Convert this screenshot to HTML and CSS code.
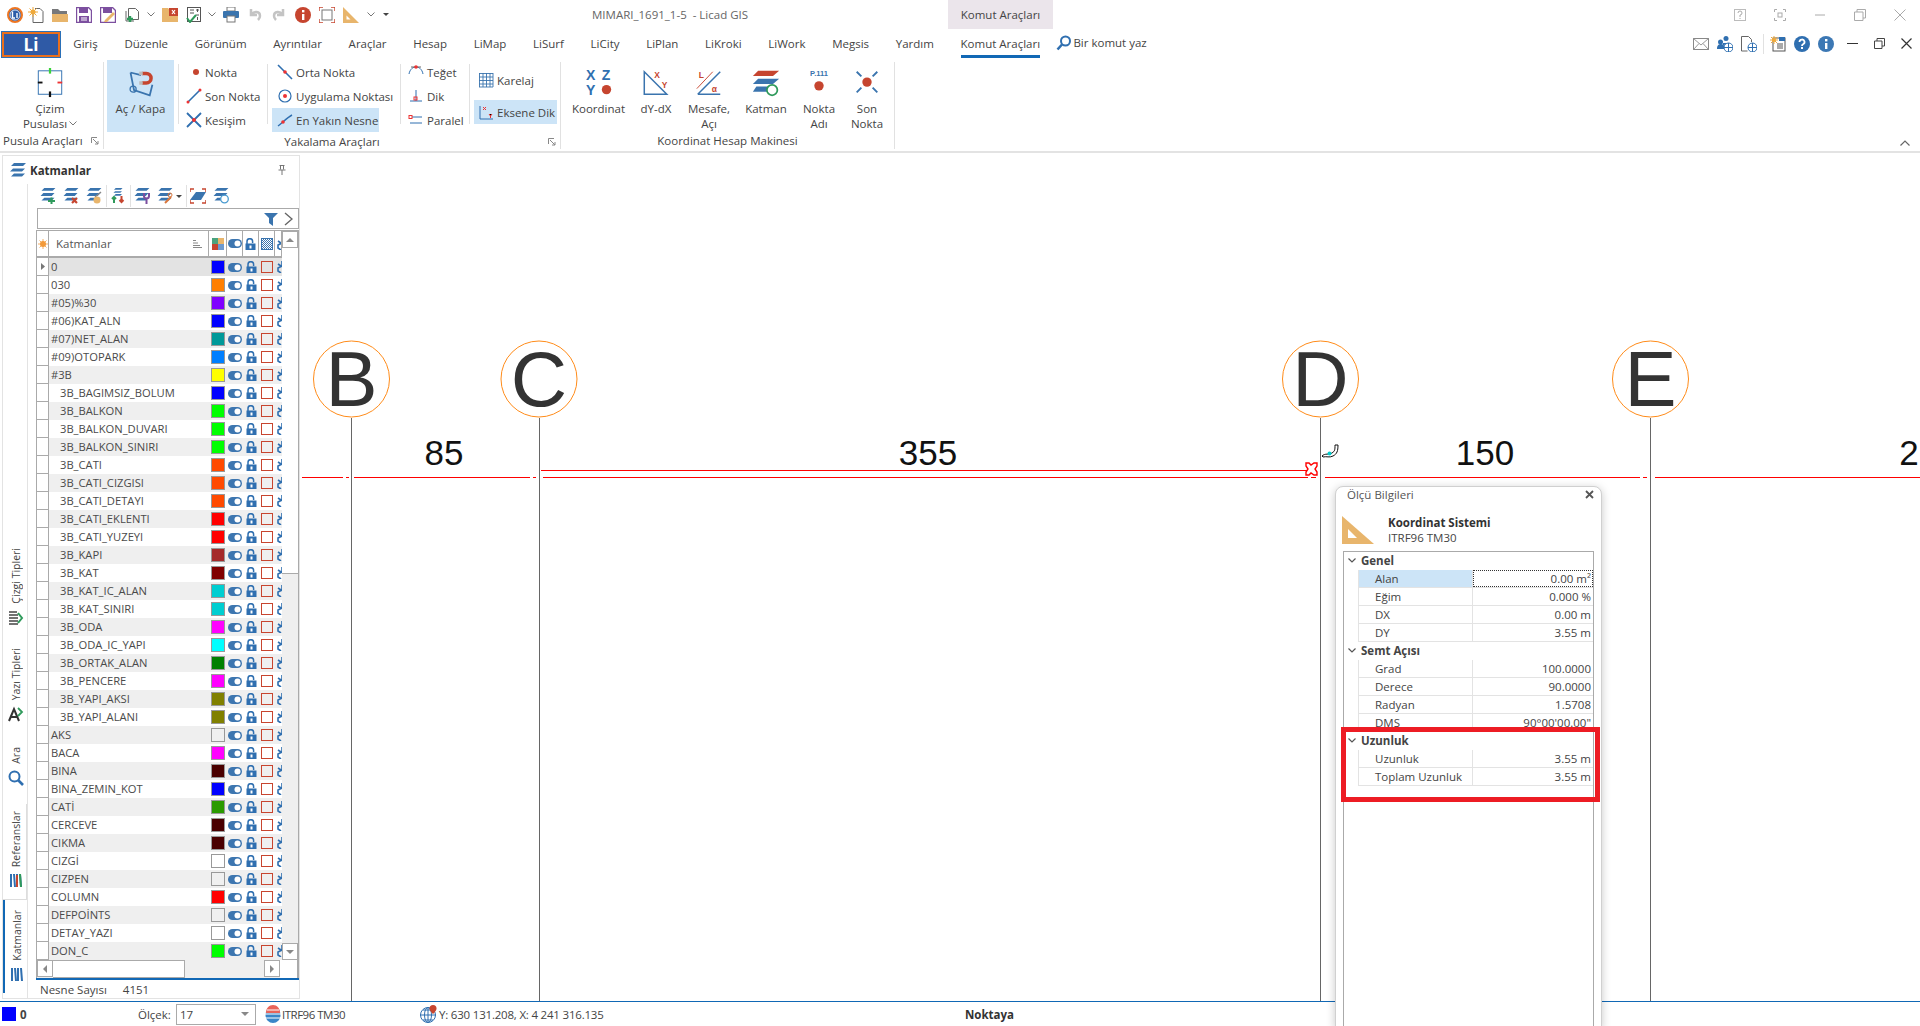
FILE: index.html
```html
<!DOCTYPE html>
<html lang="tr">
<head>
<meta charset="utf-8">
<title>MIMARI_1691_1-5 - Licad GIS</title>
<link rel="stylesheet" href="styles.css">
</head>
<body>
<svg class="defs" width="0" height="0" aria-hidden="true">
  <symbol id="layers" viewBox="0 0 16 14"><path d="M4 0h12l-3 3H1zM3 5.500h12l-3 3H0zM4 10.500h11l-3 3H1z" fill="#3a74ae"/></symbol>
  <symbol id="eye" viewBox="0 0 14 9"><rect width="14" height="9" rx="4.500" fill="#3d76b0"/><circle cx="9.500" cy="4.500" r="3" fill="#fff"/></symbol>
  <symbol id="lock" viewBox="0 0 11 12"><path d="M2 6V3.500a2.800 2.800 0 0 1 5.600 0V5" fill="none" stroke="#2f6fb0" stroke-width="1.500"/><rect x="0.500" y="5.500" width="10" height="6.500" fill="#2f6fb0"/><rect x="4.500" y="7.500" width="2" height="3" fill="#fff"/></symbol>
  <symbol id="cut" viewBox="0 0 6 12"><path d="M5 0v5L1 7v3l3 2M1 3l3 2" fill="none" stroke="#2f6fb0" stroke-width="1.600"/></symbol>
  <symbol id="chev" viewBox="0 0 8 5"><path d="M.5.500 4 4 7.500.500" fill="none" stroke="#777" stroke-width="1"/></symbol>
</svg>

<div class="app">
  <header class="titlebar">
    <div class="qat">
      <svg class="i16 q-logo" viewBox="0 0 16 16"><circle cx="8" cy="8" r="7" fill="#2b5ca8" stroke="#ee7622" stroke-width="2"/><circle cx="8" cy="8" r="5" fill="none" stroke="#fff" stroke-width=".8"/><path d="M5.500 4.500v6.500h2.500M10 6v5" stroke="#fff" stroke-width="1.400" fill="none"/></svg>
      <svg class="i16" viewBox="0 0 16 16"><path d="M7 1.500h5l3 3v11H5V7" fill="#fff" stroke="#666"/><circle cx="5" cy="5" r="2.500" fill="#efa93a"/><path d="M5 0v10M0 5h10M1.500 1.500l7 7M8.500 1.500l-7 7" stroke="#efa93a"/></svg>
      <svg class="i16" viewBox="0 0 16 16"><path d="M0 2h6l2 2h7v3H0z" fill="#77787a"/><path d="M0 15V7h16v8z" fill="#e8b56c"/></svg>
      <svg class="i16" viewBox="0 0 16 16"><path d="M.5.500h12l3 3v12H.5z" fill="#fff" stroke="#7c4f9f" stroke-width="1.400"/><rect x="3" y="1" width="9" height="5" fill="#7c4f9f"/><rect x="3" y="9" width="10" height="6" fill="#7c4f9f"/><path d="M5 11h6M5 13h6" stroke="#fff"/></svg>
      <svg class="i16 q-wide" viewBox="0 0 16 16"><path d="M.5.500h12l3 3v12H.5z" fill="#fff" stroke="#7c4f9f" stroke-width="1.400"/><rect x="3" y="1" width="9" height="5" fill="#7c4f9f"/><path d="M5 13l8-8 2 2-8 8H4z" fill="#e8b56c"/></svg>
      <span class="qat-drop"><svg class="i16" viewBox="0 0 16 16"><path d="M3.500 1.500h7l3 3v8h-10zM1 4v10h8" fill="#fff" stroke="#666"/><path d="M2 12h6M5 9v6" stroke="#2f9a5b" stroke-width="2.400"/></svg><svg class="i-chev" viewBox="0 0 8 5"><use href="#chev"/></svg></span>
      <svg class="i16" viewBox="0 0 16 16"><path d="M0 1h6l2 2h8v12H0z" fill="#e8b56c"/><rect x="7" y="1" width="9" height="8" fill="#c6452f"/><path d="M10 3l3 4M13 3l-3 4" stroke="#fff" stroke-width="1.200"/></svg>
      <span class="qat-drop"><svg class="i16" viewBox="0 0 16 16"><rect x="1.500" y=".500" width="13" height="14" fill="#fff" stroke="#555"/><path d="M4 3h4M4 6h4M10 3h3M10 8h3M11.500 2v3M11.500 10v3" stroke="#555"/><path d="M1 11l3 4 6-7" fill="none" stroke="#2f9a5b" stroke-width="2"/></svg><svg class="i-chev" viewBox="0 0 8 5"><use href="#chev"/></svg></span>
      <svg class="i16" viewBox="0 0 16 16"><rect x="4" y="0" width="8" height="4" fill="#fff" stroke="#777"/><rect x="0" y="4" width="16" height="7" rx="1" fill="#3a74ae"/><rect x="4" y="9" width="8" height="6" fill="#fff" stroke="#777"/></svg>
      <svg class="i16" viewBox="0 0 16 16"><path d="M4 2v6h6M4.500 7.500C7 4 13 4 13 9c0 2-1 3-2 4" fill="none" stroke="#c4c4c4" stroke-width="2.500"/></svg>
      <svg class="i16" viewBox="0 0 16 16"><path d="M12 2v6H6M11.500 7.500C9 4 3 4 3 9c0 2 1 3 2 4" fill="none" stroke="#c4c4c4" stroke-width="2.500"/></svg>
      <svg class="i16" viewBox="0 0 16 16"><circle cx="8" cy="8" r="8" fill="#c6452f"/><rect x="7" y="7" width="2.400" height="6" fill="#fff"/><rect x="7" y="3" width="2.400" height="2.400" fill="#fff"/></svg>
      <svg class="i16" viewBox="0 0 16 16"><path d="M0 4V0h4M12 0h4v4M16 12v4h-4M4 16H0v-4" fill="none" stroke="#c6452f" stroke-width="1.400"/><rect x="3" y="3" width="10" height="10" fill="#fff" stroke="#777"/></svg>
      <svg class="i16" viewBox="0 0 16 16"><path d="M0 0l16 16H0z" fill="#e8b56c"/><path d="M3.500 8.500l4 4h-4z" fill="#fff"/></svg>
      <svg class="i-chev" viewBox="0 0 8 5"><use href="#chev"/></svg>
      <svg class="i-drop" viewBox="0 0 6 3"><path d="M0 0h6L3 3z" fill="#444"/></svg>
    </div>
    <div class="doc-title">MIMARI_1691_1-5&nbsp; - Licad GIS</div>
    <div class="ctx-tab">Komut Araçları</div>
    <div class="win-btns">
      <svg class="i12" viewBox="0 0 12 12"><rect x=".500" y=".500" width="11" height="11" fill="none" stroke="#bbb"/><path d="M4 4a2 2 0 1 1 2 2v2M6 9v1" fill="none" stroke="#aaa"/></svg>
      <svg class="i12" viewBox="0 0 12 12"><path d="M.500 3V.500H3M9 .500h2.500V3M11.500 9v2.500H9M3 11.500H.500V9" fill="none" stroke="#aaa"/><rect x="4" y="4" width="4" height="4" fill="none" stroke="#aaa"/></svg>
      <svg class="i12" viewBox="0 0 12 12"><path d="M1 6h10" stroke="#aaa"/></svg>
      <svg class="i12" viewBox="0 0 12 12"><path d="M3 3V.500h8.500V9H9M.500 3H9v8.500H.500z" fill="none" stroke="#aaa"/></svg>
      <svg class="i12" viewBox="0 0 12 12"><path d="M.500.500l11 11M11.500.500l-11 11" stroke="#aaa"/></svg>
    </div>
  </header>

  <nav class="tabs">
    <div class="li-btn">Li</div>
    <span class="tab">Giriş</span>
    <span class="tab">Düzenle</span>
    <span class="tab">Görünüm</span>
    <span class="tab">Ayrıntılar</span>
    <span class="tab">Araçlar</span>
    <span class="tab">Hesap</span>
    <span class="tab">LiMap</span>
    <span class="tab">LiSurf</span>
    <span class="tab">LiCity</span>
    <span class="tab">LiPlan</span>
    <span class="tab">LiKroki</span>
    <span class="tab">LiWork</span>
    <span class="tab">Megsis</span>
    <span class="tab">Yardım</span>
    <span class="tab active"><span class="tab-text">Komut Araçları</span></span>
    <div class="cmd-search">
      <svg class="i16" viewBox="0 0 16 16"><circle cx="9.500" cy="6" r="4.500" fill="#fff" stroke="#2f6fb0" stroke-width="2"/><path d="M6 9.500 1.500 14.500" stroke="#2f6fb0" stroke-width="2.600"/></svg>
      <span>Bir komut yaz</span>
    </div>
    <div class="tab-right">
      <svg class="i16" viewBox="0 0 16 12"><rect x=".500" y=".500" width="15" height="11" fill="#fff" stroke="#888"/><path d="M.500.500 8 7l7.500-6.500M.500 11.500 6 5.500M15.500 11.500 10 5.500" fill="none" stroke="#999"/></svg>
      <svg class="i16" viewBox="0 0 16 16"><circle cx="9" cy="2.500" r="2.500" fill="#2f6fb0"/><circle cx="3.500" cy="6" r="2.500" fill="#2f6fb0"/><path d="M0 13c0-4 2-5 4-5s3 1 3 2v3zM6 7h6v2H6z" fill="#2f6fb0"/><circle cx="11.500" cy="11.500" r="4.500" fill="#fff" stroke="#2f6fb0"/><path d="M7 11.500h9M11.500 7v9" stroke="#2f6fb0"/></svg>
      <svg class="i16" viewBox="0 0 16 16"><path d="M.500.500h7l3 3V6M.500.500v14.500h6" fill="#fff" stroke="#666"/><circle cx="11.500" cy="11.500" r="4.500" fill="#fff" stroke="#2f6fb0"/><path d="M7 11.500h9M11.500 7v9" stroke="#2f6fb0"/></svg>
      <span class="vsep"></span>
      <svg class="i16" viewBox="0 0 16 16"><rect x="3" y="2" width="12" height="13" fill="#fff" stroke="#555"/><rect x="9" y="1" width="6" height="4" fill="#2f6fb0"/><path d="M7 8h6M7 10h6M7 12h6" stroke="#555"/><circle cx="4" cy="4" r="2" fill="#efa93a"/><path d="M4 0v8M0 4h8M1 1l6 6M7 1 1 7" stroke="#efa93a"/></svg>
      <svg class="i16" viewBox="0 0 16 16"><circle cx="8" cy="8" r="8" fill="#2f6fb0"/><path d="M5.500 6a2.500 2.500 0 1 1 3.500 2.300C8.300 8.700 8 9 8 10" fill="none" stroke="#fff" stroke-width="1.800"/><rect x="7" y="11" width="2" height="2" fill="#fff"/></svg>
      <svg class="i16" viewBox="0 0 16 16"><circle cx="8" cy="8" r="8" fill="#3c78b4"/><rect x="7" y="7" width="2.400" height="6" fill="#fff"/><rect x="7" y="3" width="2.400" height="2.400" fill="#fff"/></svg>
      <svg class="i11 first-win" viewBox="0 0 11 11"><path d="M0 5.500h11" stroke="#333"/></svg>
      <svg class="i11" viewBox="0 0 11 11"><path d="M3 3V.500h7.500V8H8M.500 3H8v7.500H.500z" fill="none" stroke="#444"/></svg>
      <svg class="i11" viewBox="0 0 11 11"><path d="M.500.500l10 10M10.500.500l-10 10" stroke="#333" stroke-width="1.200"/></svg>
    </div>
  </nav>

  <section class="ribbon">
    <div class="group g1">
      <div class="group-body">
        <div class="big b-cizim">
          <svg class="big-ic" viewBox="0 0 26 32"><rect x=".500" y="3" width="25" height="25" fill="#fff" stroke="#2f6fb0"/><path d="M13 0v6" stroke="#3ad23a" stroke-width="2.400"/><path d="M21 15.500h5" stroke="#e33" stroke-width="2"/><path d="M0 15.500h5" stroke="#111" stroke-width="2"/><path d="M13 25v6" stroke="#111" stroke-width="2.400"/></svg>
          <span>Çizim</span><span class="with-chev">Pusulası<svg class="i-chev" viewBox="0 0 8 5"><use href="#chev"/></svg></span>
        </div>
      </div>
      <div class="group-label">Pusula Araçları<svg class="launcher" viewBox="0 0 8 8"><path d="M.500 6V.500H6M2 2l5 5M7 4v3H4" fill="none" stroke="#888"/></svg></div>
    </div>

    <div class="group g2">
      <div class="group-body">
        <div class="big b-ackapa">
          <svg class="big-ic" viewBox="0 0 32 32"><path d="M4 4l4 20 18 6 3-12M4 4l12 3" fill="none" stroke="#3a74ae" stroke-width="2"/><path d="M17 3h5a6.500 6.500 0 0 1 0 15h-5v-4h5a2.500 2.500 0 0 0 0-7h-5z" fill="#c6452f"/><rect x="14" y="3" width="4" height="4" fill="#bbb"/><rect x="14" y="14" width="4" height="4" fill="#bbb"/><circle cx="7" cy="23" r="3.500" fill="none" stroke="#3a74ae" stroke-width="1.400"/></svg>
          <span>Aç / Kapa</span>
        </div>
        <div class="small-col c1">
          <div class="item"><svg class="i16" viewBox="0 0 16 16"><circle cx="10" cy="8" r="3" fill="#c6452f"/></svg><span>Nokta</span></div>
          <div class="item"><svg class="i16" viewBox="0 0 16 16"><path d="M2 14 14 2" stroke="#2f6fb0" stroke-width="1.600"/><circle cx="2" cy="14" r="1.500" fill="#e33"/><circle cx="14" cy="2" r="1.500" fill="#e33"/></svg><span>Son Nokta</span></div>
          <div class="item"><svg class="i16" viewBox="0 0 16 16"><path d="M1 1l14 14M15 1 1 15" stroke="#2f6fb0" stroke-width="1.800"/><circle cx="8" cy="8" r="2" fill="#e33"/></svg><span>Kesişim</span></div>
        </div>
        <div class="small-col c2">
          <div class="item"><svg class="i16" viewBox="0 0 16 16"><path d="M1 1l14 14" stroke="#2f6fb0" stroke-width="1.600"/><circle cx="8" cy="8" r="1.800" fill="#e33"/></svg><span>Orta Nokta</span></div>
          <div class="item"><svg class="i16" viewBox="0 0 16 16"><circle cx="8" cy="8" r="6" fill="none" stroke="#2f6fb0" stroke-width="1.200"/><circle cx="8" cy="8" r="2" fill="#e33"/></svg><span>Uygulama Noktası</span></div>
          <div class="item on"><svg class="i16" viewBox="0 0 16 16"><path d="M1 14C5 11 11 5 15 3" fill="none" stroke="#2f6fb0" stroke-width="1.400"/><circle cx="6" cy="10" r="1.800" fill="#e33"/></svg><span>En Yakın Nesne</span></div>
        </div>
        <div class="small-col c3">
          <div class="item"><svg class="i16" viewBox="0 0 16 16"><path d="M1 10C2 5 5 3 8 3s6 2 7 7" fill="none" stroke="#2f6fb0"/><path d="M3 3h10" stroke="#666"/><circle cx="8" cy="3" r="1.800" fill="#e33"/></svg><span>Teğet</span></div>
          <div class="item"><svg class="i16" viewBox="0 0 16 16"><path d="M2 13h12M8 2v11" stroke="#2f6fb0"/><rect x="6" y="9" width="3" height="3" fill="none" stroke="#e33"/></svg><span>Dik</span></div>
          <div class="item"><svg class="i16" viewBox="0 0 16 16"><path d="M3 5h11M2 11h12" stroke="#2f6fb0"/><rect x="1" y="3.500" width="3" height="3" fill="#fff" stroke="#e33"/></svg><span>Paralel</span></div>
        </div>
        <div class="small-col c4">
          <div class="item mid"><svg class="i16" viewBox="0 0 16 16"><path d="M1 1.500h14M1 5h14M1 8.500h14M1 12h14M1.500 1v14M5 1v14M8.500 1v14M12 1v14M1 15h14M15 1v14" stroke="#3a74ae" stroke-width=".9"/></svg><span>Karelaj</span></div>
          <div class="item mid on"><svg class="i16" viewBox="0 0 16 16"><path d="M2 2v13h13" fill="none" stroke="#2f6fb0"/><path d="M5 3l3 3M8 3 5 6M11 10l1.500 2 1.500-2M12.500 12v2" stroke="#e33"/></svg><span>Eksene Dik</span></div>
        </div>
      </div>
      <div class="group-label">Yakalama Araçları<svg class="launcher" viewBox="0 0 8 8"><path d="M.500 6V.500H6M2 2l5 5M7 4v3H4" fill="none" stroke="#888"/></svg></div>
    </div>

    <div class="group g3">
      <div class="group-body">
        <div class="big w-k"><svg class="big-ic" viewBox="0 0 28 32"><text x="0" y="13" class="ic-t">X</text><text x="17" y="13" class="ic-t">Z</text><text x="0" y="29" class="ic-t">Y</text><circle cx="22" cy="23" r="5" fill="#c6452f"/></svg><span>Koordinat</span></div>
        <div class="big w-d"><svg class="big-ic" viewBox="0 0 28 32"><path d="M1.500 4v24h24z" fill="none" stroke="#3a74ae" stroke-width="1.600"/><text x="12" y="11" class="ic-r">X</text><text x="20" y="21" class="ic-r">Y</text></svg><span>dY-dX</span></div>
        <div class="big w-m"><svg class="big-ic" viewBox="0 0 28 32"><path d="M2 28 26 4M2 28h24" fill="none" stroke="#3a74ae" stroke-width="1.600"/><path d="M1 22 18 4" stroke="#c6452f"/><text x="3" y="11" class="ic-r">L</text><text x="17" y="26" class="ic-r">α</text></svg><span>Mesafe,</span><span>Açı</span></div>
        <div class="big w-t"><svg class="big-ic" viewBox="0 0 32 32"><path d="M7 2h24l-7 6H1z" fill="#c6452f"/><path d="M7 11h24l-7 6H1z" fill="#3a74ae"/><path d="M5 20h16l-4 6H1z" fill="#3a74ae"/><circle cx="23" cy="24" r="6" fill="#fff" stroke="#2f9a5b" stroke-width="2"/></svg><span>Katman</span></div>
        <div class="big w-n"><svg class="big-ic" viewBox="0 0 28 32"><text x="14" y="9" class="ic-p">P.111</text><circle cx="14" cy="19" r="5" fill="#c6452f"/></svg><span>Nokta</span><span>Adı</span></div>
        <div class="big w-s"><svg class="big-ic" viewBox="0 0 28 32"><circle cx="14" cy="15" r="5" fill="#c6452f"/><path d="M3 4l5 5M25 4l-5 5M3 26l5-5M25 26l-5-5" stroke="#3a74ae" stroke-width="2"/></svg><span>Son</span><span>Nokta</span></div>
      </div>
      <div class="group-label">Koordinat Hesap Makinesi</div>
    </div>
    <svg class="collapse" viewBox="0 0 10 6"><path d="M.500 5.500 5 1l4.500 4.500" fill="none" stroke="#666" stroke-width="1.200"/></svg>
  </section>

  <main class="main">
    <aside class="panel">
      <div class="side">
        <div class="side-tab s-cizgi"><span class="vtext">Çizgi Tipleri</span><svg class="i16" viewBox="0 0 16 16"><path d="M1 2h8M1 5h9M1 8h9M1 11h9M1 14h9" stroke="#444" stroke-width="1.600"/><path d="M10 3l4 5-4 5" fill="none" stroke="#2f9a5b" stroke-width="2"/></svg></div>
        <div class="side-tab s-yazi"><span class="vtext">Yazı Tipleri</span><svg class="i16" viewBox="0 0 16 16"><path d="M1 15 6 3l5 12M3 11h6" fill="none" stroke="#333" stroke-width="2"/><path d="M10 2l4 4-4 4" fill="none" stroke="#2f9a5b" stroke-width="1.800"/></svg></div>
        <div class="side-tab s-ara"><span class="vtext">Ara</span><svg class="i16" viewBox="0 0 16 16"><circle cx="6.500" cy="6.500" r="5" fill="none" stroke="#2f6fb0" stroke-width="2"/><path d="M10 10l5 5" stroke="#2f6fb0" stroke-width="2.600"/></svg></div>
        <div class="side-tab s-ref"><span class="vtext">Referanslar</span><svg class="i16" viewBox="0 0 12 16"><path d="M1 1v13M4 1l1 13M7 1v13M10 1l1 13" stroke="#2f6fb0" stroke-width="2"/><path d="M7 2v12" stroke="#c6452f" stroke-width="2"/><path d="M10 1l1 13" stroke="#2f9a5b" stroke-width="2"/></svg></div>
        <div class="side-tab s-kat"><span class="vtext">Katmanlar</span><svg class="i16" viewBox="0 0 12 16"><path d="M1 1v13M4 1l1 13M7 1v13M10 1l1 13" stroke="#2f6fb0" stroke-width="2"/></svg></div>
      </div>
      <div class="panel-body">
        <div class="panel-head">
          <svg class="i16" viewBox="0 0 16 14"><use href="#layers"/></svg>
          <b>Katmanlar</b>
          <svg class="pin" viewBox="0 0 8 10"><path d="M1.500.500h5M2.500.500v4M5.500.500v4M.500 5h7M4 5v5" fill="none" stroke="#777"/></svg>
        </div>
        <div class="panel-inner">
          <div class="p-toolbar">
            <svg class="i16" viewBox="0 0 16 16"><use href="#layers" width="16" height="13"/><path d="M8 13h7M11.500 9.500v6.500" stroke="#2f9a5b" stroke-width="2"/></svg>
            <svg class="i16" viewBox="0 0 16 16"><use href="#layers" width="16" height="13"/><path d="M9 10l5 5M14 10l-5 5" stroke="#c6452f" stroke-width="2.200"/></svg>
            <svg class="i16" viewBox="0 0 16 16"><use href="#layers" width="16" height="13"/><path d="M9 9l6-5" stroke="#888" stroke-width="1.400"/><circle cx="11" cy="12" r="3.500" fill="#e8b56c"/></svg>
            <span class="t-sep"></span>
            <svg class="i16" viewBox="0 0 16 16"><use href="#layers" width="16" height="8"/><path d="M4 9v6M2 11l2-2 2 2" fill="none" stroke="#2f9a5b" stroke-width="2"/><path d="M11.500 8v6M9.500 12l2 2 2-2" fill="none" stroke="#c6452f" stroke-width="2"/></svg>
            <span class="t-sep"></span>
            <svg class="i16" viewBox="0 0 16 16"><use href="#layers" width="16" height="13"/><path d="M10 5v3a2.500 2.500 0 0 0 5 0V5M12.500 10v6" fill="none" stroke="#7c4f9f" stroke-width="2"/></svg>
            <span class="t-drop"><svg class="i16" viewBox="0 0 16 16"><use href="#layers" width="16" height="13"/><path d="M8 15l6-6" stroke="#d9763d" stroke-width="2"/><circle cx="13" cy="7" r="2" fill="none" stroke="#d9763d"/></svg><svg class="i-drop" viewBox="0 0 6 3"><path d="M0 0h6L3 3z" fill="#444"/></svg></span>
            <span class="t-sep"></span>
            <svg class="i16" viewBox="0 0 16 16"><path d="M6 4h10l-5 8H0z" fill="#3a74ae"/><path d="M0 4V1h4M12 1h4v3M16 12v3h-4M4 15H0v-3" fill="none" stroke="#c6452f" stroke-width="1.500"/></svg>
            <svg class="i16" viewBox="0 0 16 16"><use href="#layers" width="16" height="13"/><circle cx="11.500" cy="11" r="3.800" fill="#fff" stroke="#4a9bd0" stroke-width="1.300"/></svg>
          </div>
          <div class="filter">
            <svg class="i14" viewBox="0 0 14 14"><path d="M0 1h14L9 6v8L5 11V6z" fill="#3a74ae"/></svg>
            <svg class="filter-chev" viewBox="0 0 9 14"><path d="M1 1l7 6-7 6" fill="none" stroke="#666" stroke-width="1.400"/></svg>
          </div>
          <div class="grid">
            <div class="grid-top">
              <div class="list">
                <div class="hdr">
                  <span class="ind"><svg class="sun" viewBox="0 0 10 10"><circle cx="5" cy="5" r="3" fill="#f39a3a"/><path d="M5 0v10M0 5h10M1.500 1.500l7 7M8.500 1.500l-7 7" stroke="#f39a3a" stroke-width=".8"/></svg></span>
                  <span class="h-name"><span>Katmanlar</span><svg class="sort" viewBox="0 0 9 8"><path d="M0 .500h3M0 3h5M0 5.500h7M0 7.500h9" stroke="#888"/></svg></span>
                  <span class="h-c c-sw"><svg class="i12" viewBox="0 0 12 12"><rect width="6" height="6" fill="#4aa37d"/><rect x="6" width="6" height="6" fill="#e8b56c"/><rect y="6" width="6" height="6" fill="#c6452f"/><rect x="6" y="6" width="6" height="6" fill="#6b9ad0"/></svg></span>
                  <span class="h-c c-i"><svg class="i-eye" viewBox="0 0 14 9"><use href="#eye"/></svg></span>
                  <span class="h-c c-i"><svg class="i-lock" viewBox="0 0 11 12"><use href="#lock"/></svg></span>
                  <span class="h-c c-i"><span class="hatch"></span></span>
                  <span class="h-c c-cut"><svg class="i-cut" viewBox="0 0 6 12"><use href="#cut"/></svg></span>
                </div>
                <div class="rows">
                  <div class="row sel"><span class="ind"><svg class="arrow" viewBox="0 0 4 7"><path d="M0 0l4 3.500L0 7z" fill="#777"/></svg></span><span class="nm">0</span><span class="c-sw"><span class="sw" style="background:#0000ff"></span></span><span class="c-i"><svg class="i-eye"><use href="#eye"/></svg></span><span class="c-i"><svg class="i-lock"><use href="#lock"/></svg></span><span class="c-i"><span class="bx"></span></span><span class="c-cut"><svg class="i-cut"><use href="#cut"/></svg></span></div>
                  <div class="row"><span class="ind"></span><span class="nm">030</span><span class="c-sw"><span class="sw" style="background:#ff7f00"></span></span><span class="c-i"><svg class="i-eye"><use href="#eye"/></svg></span><span class="c-i"><svg class="i-lock"><use href="#lock"/></svg></span><span class="c-i"><span class="bx"></span></span><span class="c-cut"><svg class="i-cut"><use href="#cut"/></svg></span></div>
                  <div class="row"><span class="ind"></span><span class="nm">#05)%30</span><span class="c-sw"><span class="sw" style="background:#7f00ff"></span></span><span class="c-i"><svg class="i-eye"><use href="#eye"/></svg></span><span class="c-i"><svg class="i-lock"><use href="#lock"/></svg></span><span class="c-i"><span class="bx"></span></span><span class="c-cut"><svg class="i-cut"><use href="#cut"/></svg></span></div>
                  <div class="row"><span class="ind"></span><span class="nm">#06)KAT_ALN</span><span class="c-sw"><span class="sw" style="background:#0000ff"></span></span><span class="c-i"><svg class="i-eye"><use href="#eye"/></svg></span><span class="c-i"><svg class="i-lock"><use href="#lock"/></svg></span><span class="c-i"><span class="bx"></span></span><span class="c-cut"><svg class="i-cut"><use href="#cut"/></svg></span></div>
                  <div class="row"><span class="ind"></span><span class="nm">#07)NET_ALAN</span><span class="c-sw"><span class="sw" style="background:#009999"></span></span><span class="c-i"><svg class="i-eye"><use href="#eye"/></svg></span><span class="c-i"><svg class="i-lock"><use href="#lock"/></svg></span><span class="c-i"><span class="bx"></span></span><span class="c-cut"><svg class="i-cut"><use href="#cut"/></svg></span></div>
                  <div class="row"><span class="ind"></span><span class="nm">#09)OTOPARK</span><span class="c-sw"><span class="sw" style="background:#007fff"></span></span><span class="c-i"><svg class="i-eye"><use href="#eye"/></svg></span><span class="c-i"><svg class="i-lock"><use href="#lock"/></svg></span><span class="c-i"><span class="bx"></span></span><span class="c-cut"><svg class="i-cut"><use href="#cut"/></svg></span></div>
                  <div class="row"><span class="ind"></span><span class="nm">#3B</span><span class="c-sw"><span class="sw" style="background:#ffff00"></span></span><span class="c-i"><svg class="i-eye"><use href="#eye"/></svg></span><span class="c-i"><svg class="i-lock"><use href="#lock"/></svg></span><span class="c-i"><span class="bx"></span></span><span class="c-cut"><svg class="i-cut"><use href="#cut"/></svg></span></div>
                  <div class="row"><span class="ind"></span><span class="nm ch">3B_BAGIMSIZ_BOLUM</span><span class="c-sw"><span class="sw" style="background:#0000ff"></span></span><span class="c-i"><svg class="i-eye"><use href="#eye"/></svg></span><span class="c-i"><svg class="i-lock"><use href="#lock"/></svg></span><span class="c-i"><span class="bx"></span></span><span class="c-cut"><svg class="i-cut"><use href="#cut"/></svg></span></div>
                  <div class="row"><span class="ind"></span><span class="nm ch">3B_BALKON</span><span class="c-sw"><span class="sw" style="background:#00ff00"></span></span><span class="c-i"><svg class="i-eye"><use href="#eye"/></svg></span><span class="c-i"><svg class="i-lock"><use href="#lock"/></svg></span><span class="c-i"><span class="bx"></span></span><span class="c-cut"><svg class="i-cut"><use href="#cut"/></svg></span></div>
                  <div class="row"><span class="ind"></span><span class="nm ch">3B_BALKON_DUVARI</span><span class="c-sw"><span class="sw" style="background:#00ff00"></span></span><span class="c-i"><svg class="i-eye"><use href="#eye"/></svg></span><span class="c-i"><svg class="i-lock"><use href="#lock"/></svg></span><span class="c-i"><span class="bx"></span></span><span class="c-cut"><svg class="i-cut"><use href="#cut"/></svg></span></div>
                  <div class="row"><span class="ind"></span><span class="nm ch">3B_BALKON_SINIRI</span><span class="c-sw"><span class="sw" style="background:#00ff00"></span></span><span class="c-i"><svg class="i-eye"><use href="#eye"/></svg></span><span class="c-i"><svg class="i-lock"><use href="#lock"/></svg></span><span class="c-i"><span class="bx"></span></span><span class="c-cut"><svg class="i-cut"><use href="#cut"/></svg></span></div>
                  <div class="row"><span class="ind"></span><span class="nm ch">3B_CATI</span><span class="c-sw"><span class="sw" style="background:#ff4a00"></span></span><span class="c-i"><svg class="i-eye"><use href="#eye"/></svg></span><span class="c-i"><svg class="i-lock"><use href="#lock"/></svg></span><span class="c-i"><span class="bx"></span></span><span class="c-cut"><svg class="i-cut"><use href="#cut"/></svg></span></div>
                  <div class="row"><span class="ind"></span><span class="nm ch">3B_CATI_CIZGISI</span><span class="c-sw"><span class="sw" style="background:#ff4a00"></span></span><span class="c-i"><svg class="i-eye"><use href="#eye"/></svg></span><span class="c-i"><svg class="i-lock"><use href="#lock"/></svg></span><span class="c-i"><span class="bx"></span></span><span class="c-cut"><svg class="i-cut"><use href="#cut"/></svg></span></div>
                  <div class="row"><span class="ind"></span><span class="nm ch">3B_CATI_DETAYI</span><span class="c-sw"><span class="sw" style="background:#ff4a00"></span></span><span class="c-i"><svg class="i-eye"><use href="#eye"/></svg></span><span class="c-i"><svg class="i-lock"><use href="#lock"/></svg></span><span class="c-i"><span class="bx"></span></span><span class="c-cut"><svg class="i-cut"><use href="#cut"/></svg></span></div>
                  <div class="row"><span class="ind"></span><span class="nm ch">3B_CATI_EKLENTI</span><span class="c-sw"><span class="sw" style="background:#ff0000"></span></span><span class="c-i"><svg class="i-eye"><use href="#eye"/></svg></span><span class="c-i"><svg class="i-lock"><use href="#lock"/></svg></span><span class="c-i"><span class="bx"></span></span><span class="c-cut"><svg class="i-cut"><use href="#cut"/></svg></span></div>
                  <div class="row"><span class="ind"></span><span class="nm ch">3B_CATI_YUZEYI</span><span class="c-sw"><span class="sw" style="background:#ff0000"></span></span><span class="c-i"><svg class="i-eye"><use href="#eye"/></svg></span><span class="c-i"><svg class="i-lock"><use href="#lock"/></svg></span><span class="c-i"><span class="bx"></span></span><span class="c-cut"><svg class="i-cut"><use href="#cut"/></svg></span></div>
                  <div class="row"><span class="ind"></span><span class="nm ch">3B_KAPI</span><span class="c-sw"><span class="sw" style="background:#a52a2a"></span></span><span class="c-i"><svg class="i-eye"><use href="#eye"/></svg></span><span class="c-i"><svg class="i-lock"><use href="#lock"/></svg></span><span class="c-i"><span class="bx"></span></span><span class="c-cut"><svg class="i-cut"><use href="#cut"/></svg></span></div>
                  <div class="row"><span class="ind"></span><span class="nm ch">3B_KAT</span><span class="c-sw"><span class="sw" style="background:#800000"></span></span><span class="c-i"><svg class="i-eye"><use href="#eye"/></svg></span><span class="c-i"><svg class="i-lock"><use href="#lock"/></svg></span><span class="c-i"><span class="bx"></span></span><span class="c-cut"><svg class="i-cut"><use href="#cut"/></svg></span></div>
                  <div class="row"><span class="ind"></span><span class="nm ch">3B_KAT_IC_ALAN</span><span class="c-sw"><span class="sw" style="background:#00ced1"></span></span><span class="c-i"><svg class="i-eye"><use href="#eye"/></svg></span><span class="c-i"><svg class="i-lock"><use href="#lock"/></svg></span><span class="c-i"><span class="bx"></span></span><span class="c-cut"><svg class="i-cut"><use href="#cut"/></svg></span></div>
                  <div class="row"><span class="ind"></span><span class="nm ch">3B_KAT_SINIRI</span><span class="c-sw"><span class="sw" style="background:#00ced1"></span></span><span class="c-i"><svg class="i-eye"><use href="#eye"/></svg></span><span class="c-i"><svg class="i-lock"><use href="#lock"/></svg></span><span class="c-i"><span class="bx"></span></span><span class="c-cut"><svg class="i-cut"><use href="#cut"/></svg></span></div>
                  <div class="row"><span class="ind"></span><span class="nm ch">3B_ODA</span><span class="c-sw"><span class="sw" style="background:#ff00ff"></span></span><span class="c-i"><svg class="i-eye"><use href="#eye"/></svg></span><span class="c-i"><svg class="i-lock"><use href="#lock"/></svg></span><span class="c-i"><span class="bx"></span></span><span class="c-cut"><svg class="i-cut"><use href="#cut"/></svg></span></div>
                  <div class="row"><span class="ind"></span><span class="nm ch">3B_ODA_IC_YAPI</span><span class="c-sw"><span class="sw" style="background:#00ffff"></span></span><span class="c-i"><svg class="i-eye"><use href="#eye"/></svg></span><span class="c-i"><svg class="i-lock"><use href="#lock"/></svg></span><span class="c-i"><span class="bx"></span></span><span class="c-cut"><svg class="i-cut"><use href="#cut"/></svg></span></div>
                  <div class="row"><span class="ind"></span><span class="nm ch">3B_ORTAK_ALAN</span><span class="c-sw"><span class="sw" style="background:#008000"></span></span><span class="c-i"><svg class="i-eye"><use href="#eye"/></svg></span><span class="c-i"><svg class="i-lock"><use href="#lock"/></svg></span><span class="c-i"><span class="bx"></span></span><span class="c-cut"><svg class="i-cut"><use href="#cut"/></svg></span></div>
                  <div class="row"><span class="ind"></span><span class="nm ch">3B_PENCERE</span><span class="c-sw"><span class="sw" style="background:#ff00ff"></span></span><span class="c-i"><svg class="i-eye"><use href="#eye"/></svg></span><span class="c-i"><svg class="i-lock"><use href="#lock"/></svg></span><span class="c-i"><span class="bx"></span></span><span class="c-cut"><svg class="i-cut"><use href="#cut"/></svg></span></div>
                  <div class="row"><span class="ind"></span><span class="nm ch">3B_YAPI_AKSI</span><span class="c-sw"><span class="sw" style="background:#808000"></span></span><span class="c-i"><svg class="i-eye"><use href="#eye"/></svg></span><span class="c-i"><svg class="i-lock"><use href="#lock"/></svg></span><span class="c-i"><span class="bx"></span></span><span class="c-cut"><svg class="i-cut"><use href="#cut"/></svg></span></div>
                  <div class="row"><span class="ind"></span><span class="nm ch">3B_YAPI_ALANI</span><span class="c-sw"><span class="sw" style="background:#808000"></span></span><span class="c-i"><svg class="i-eye"><use href="#eye"/></svg></span><span class="c-i"><svg class="i-lock"><use href="#lock"/></svg></span><span class="c-i"><span class="bx"></span></span><span class="c-cut"><svg class="i-cut"><use href="#cut"/></svg></span></div>
                  <div class="row"><span class="ind"></span><span class="nm">AKS</span><span class="c-sw"><span class="sw" style="background:#f0f0f0"></span></span><span class="c-i"><svg class="i-eye"><use href="#eye"/></svg></span><span class="c-i"><svg class="i-lock"><use href="#lock"/></svg></span><span class="c-i"><span class="bx"></span></span><span class="c-cut"><svg class="i-cut"><use href="#cut"/></svg></span></div>
                  <div class="row"><span class="ind"></span><span class="nm">BACA</span><span class="c-sw"><span class="sw" style="background:#ff00ff"></span></span><span class="c-i"><svg class="i-eye"><use href="#eye"/></svg></span><span class="c-i"><svg class="i-lock"><use href="#lock"/></svg></span><span class="c-i"><span class="bx"></span></span><span class="c-cut"><svg class="i-cut"><use href="#cut"/></svg></span></div>
                  <div class="row"><span class="ind"></span><span class="nm">BINA</span><span class="c-sw"><span class="sw" style="background:#4a0000"></span></span><span class="c-i"><svg class="i-eye"><use href="#eye"/></svg></span><span class="c-i"><svg class="i-lock"><use href="#lock"/></svg></span><span class="c-i"><span class="bx"></span></span><span class="c-cut"><svg class="i-cut"><use href="#cut"/></svg></span></div>
                  <div class="row"><span class="ind"></span><span class="nm">BINA_ZEMIN_KOT</span><span class="c-sw"><span class="sw" style="background:#0000ff"></span></span><span class="c-i"><svg class="i-eye"><use href="#eye"/></svg></span><span class="c-i"><svg class="i-lock"><use href="#lock"/></svg></span><span class="c-i"><span class="bx"></span></span><span class="c-cut"><svg class="i-cut"><use href="#cut"/></svg></span></div>
                  <div class="row"><span class="ind"></span><span class="nm">CATİ</span><span class="c-sw"><span class="sw" style="background:#2b9a00"></span></span><span class="c-i"><svg class="i-eye"><use href="#eye"/></svg></span><span class="c-i"><svg class="i-lock"><use href="#lock"/></svg></span><span class="c-i"><span class="bx"></span></span><span class="c-cut"><svg class="i-cut"><use href="#cut"/></svg></span></div>
                  <div class="row"><span class="ind"></span><span class="nm">CERCEVE</span><span class="c-sw"><span class="sw" style="background:#4a0000"></span></span><span class="c-i"><svg class="i-eye"><use href="#eye"/></svg></span><span class="c-i"><svg class="i-lock"><use href="#lock"/></svg></span><span class="c-i"><span class="bx"></span></span><span class="c-cut"><svg class="i-cut"><use href="#cut"/></svg></span></div>
                  <div class="row"><span class="ind"></span><span class="nm">CIKMA</span><span class="c-sw"><span class="sw" style="background:#4a0000"></span></span><span class="c-i"><svg class="i-eye"><use href="#eye"/></svg></span><span class="c-i"><svg class="i-lock"><use href="#lock"/></svg></span><span class="c-i"><span class="bx"></span></span><span class="c-cut"><svg class="i-cut"><use href="#cut"/></svg></span></div>
                  <div class="row"><span class="ind"></span><span class="nm">CIZGİ</span><span class="c-sw"><span class="sw" style="background:#ffffff"></span></span><span class="c-i"><svg class="i-eye"><use href="#eye"/></svg></span><span class="c-i"><svg class="i-lock"><use href="#lock"/></svg></span><span class="c-i"><span class="bx"></span></span><span class="c-cut"><svg class="i-cut"><use href="#cut"/></svg></span></div>
                  <div class="row"><span class="ind"></span><span class="nm">CIZPEN</span><span class="c-sw"><span class="sw" style="background:#f0f0f0"></span></span><span class="c-i"><svg class="i-eye"><use href="#eye"/></svg></span><span class="c-i"><svg class="i-lock"><use href="#lock"/></svg></span><span class="c-i"><span class="bx"></span></span><span class="c-cut"><svg class="i-cut"><use href="#cut"/></svg></span></div>
                  <div class="row"><span class="ind"></span><span class="nm">COLUMN</span><span class="c-sw"><span class="sw" style="background:#ff0000"></span></span><span class="c-i"><svg class="i-eye"><use href="#eye"/></svg></span><span class="c-i"><svg class="i-lock"><use href="#lock"/></svg></span><span class="c-i"><span class="bx"></span></span><span class="c-cut"><svg class="i-cut"><use href="#cut"/></svg></span></div>
                  <div class="row"><span class="ind"></span><span class="nm">DEFPOİNTS</span><span class="c-sw"><span class="sw" style="background:#f0f0f0"></span></span><span class="c-i"><svg class="i-eye"><use href="#eye"/></svg></span><span class="c-i"><svg class="i-lock"><use href="#lock"/></svg></span><span class="c-i"><span class="bx"></span></span><span class="c-cut"><svg class="i-cut"><use href="#cut"/></svg></span></div>
                  <div class="row"><span class="ind"></span><span class="nm">DETAY_YAZI</span><span class="c-sw"><span class="sw" style="background:#ffffff"></span></span><span class="c-i"><svg class="i-eye"><use href="#eye"/></svg></span><span class="c-i"><svg class="i-lock"><use href="#lock"/></svg></span><span class="c-i"><span class="bx"></span></span><span class="c-cut"><svg class="i-cut"><use href="#cut"/></svg></span></div>
                  <div class="row"><span class="ind"></span><span class="nm">DON_C</span><span class="c-sw"><span class="sw" style="background:#00ff00"></span></span><span class="c-i"><svg class="i-eye"><use href="#eye"/></svg></span><span class="c-i"><svg class="i-lock"><use href="#lock"/></svg></span><span class="c-i"><span class="bx"></span></span><span class="c-cut"><svg class="i-cut"><use href="#cut"/></svg></span></div>
                </div>
              </div>
              <div class="vscroll">
                <span class="sb-btn"><svg class="i-tri" viewBox="0 0 8 4"><path d="M0 4h8L4 0z" fill="#888"/></svg></span>
                <span class="v-thumb"></span>
                <span class="sb-btn end"><svg class="i-tri" viewBox="0 0 8 4"><path d="M0 0h8L4 4z" fill="#888"/></svg></span>
              </div>
            </div>
            <div class="hscroll">
              <span class="sb-btn h"><svg class="i-tri-v" viewBox="0 0 4 8"><path d="M4 0v8L0 4z" fill="#888"/></svg></span>
              <span class="h-thumb"></span>
              <span class="sb-btn h"><svg class="i-tri-v" viewBox="0 0 4 8"><path d="M0 0v8l4-4z" fill="#888"/></svg></span>
              <span class="corner"></span>
            </div>
          </div>
          <div class="count"><span>Nesne Sayısı</span><span>4151</span></div>
        </div>
      </div>
    </aside>

    <div class="canvas">
      <svg class="drawing" viewBox="300 153 1620 848" width="1620" height="848">
        <g class="grid-lines">
          <path d="M351.500 418V1001M539.500 418V1001M1320.500 418V1001M1650.500 418V1001"/>
        </g>
        <g class="red-lines">
          <path d="M302 477.500H343M346 477.500H349M354 477.500H530M533 477.500H536M543 477.500H1308M1311 477.500H1316M1325 477.500H1640M1643 477.500H1647M1655 477.500H1920M541 470.500H1312"/>
        </g>
        <g class="bubbles">
          <circle cx="351.500" cy="379" r="38"/><circle cx="539" cy="379" r="38"/><circle cx="1320.500" cy="379" r="38"/><circle cx="1650.500" cy="379" r="38"/>
        </g>
        <text class="axis" x="351.500" y="406">B</text>
        <text class="axis" x="539" y="406">C</text>
        <text class="axis" x="1320.500" y="406">D</text>
        <text class="axis" x="1650.500" y="406">E</text>
        <text class="dim" x="444" y="465">85</text>
        <text class="dim" x="928" y="465">355</text>
        <text class="dim" x="1485" y="465">150</text>
        <text class="dim" x="1909" y="465">2</text>
        <path d="M1306 463h3l2 2 3-2h3v3l-2 3 2 3v3h-3l-3-2-2 2h-3v-3l2-3-2-3z" fill="#fff" stroke="#f00" stroke-width="1.400"/>
        <path d="M1322 456c3-3 7-1 10-3s3-3 3-8h3c0 6-1 9-5 11s-6 0-10 1z" fill="#fff" stroke="#111"/>
        <circle cx="1329.500" cy="453.500" r="2" fill="#0cc"/>
      </svg>
    </div>
  </main>

  <footer class="status">
    <span class="st-swatch"></span>
    <b class="st-layer">0</b>
    <span class="st-scale">Ölçek:</span>
    <span class="st-select">17<svg class="i-tri" viewBox="0 0 8 4"><path d="M0 0h8L4 4z" fill="#888"/></svg></span>
    <svg class="st-ic" viewBox="0 0 16 18"><ellipse cx="8" cy="10" rx="7.500" ry="8" fill="#3a86c8"/><path d="M1 8c0-5 3-8 7-8s7 3 7 8z" fill="#e8645a"/><path d="M0 9h16M2 5h12M0 13h16" stroke="#fff"/></svg>
    <span class="st-crs">ITRF96 TM30</span>
    <svg class="st-ic globe" viewBox="0 0 18 18"><circle cx="8" cy="10" r="7.500" fill="#fff" stroke="#2f6fb0"/><path d="M0 10h16M8 2v16M3 5h10M3 15h10" stroke="#2f6fb0"/><ellipse cx="8" cy="10" rx="3.500" ry="7.500" fill="none" stroke="#2f6fb0"/><path d="M13 0a3.500 3.500 0 0 1 3.500 3.500C16.500 6 13 9 13 9S9.500 6 9.500 3.500A3.500 3.500 0 0 1 13 0z" fill="#c6452f"/></svg>
    <span class="st-coord">Y: 630 131.208, X: 4 241 316.135</span>
    <b class="st-mode">Noktaya</b>
  </footer>

  <div class="dialog">
    <div class="dlg-title"><span>Ölçü Bilgileri</span><svg class="dlg-x" viewBox="0 0 9 9"><path d="M1 1l7 7M8 1 1 8" stroke="#555" stroke-width="1.800"/></svg></div>
    <div class="dlg-info">
      <svg class="dlg-tri" viewBox="0 0 32 28"><path d="M0 0l32 28H0z" fill="#e8b56c"/><path d="M6 13l9 9H6z" fill="#fff"/></svg>
      <div class="dlg-info-t"><b>Koordinat Sistemi</b><span>ITRF96 TM30</span></div>
    </div>
    <div class="pg">
      <div class="pg-cat"><svg class="pg-chev" viewBox="0 0 8 5"><path d="M.500.500 4 4 7.500.500" fill="none" stroke="#555" stroke-width="1.200"/></svg>Genel</div>
      <div class="pg-row act"><span class="pg-n">Alan</span><span class="pg-v">0.00 m²</span></div>
      <div class="pg-row"><span class="pg-n">Eğim</span><span class="pg-v">0.000 %</span></div>
      <div class="pg-row"><span class="pg-n">DX</span><span class="pg-v">0.00 m</span></div>
      <div class="pg-row"><span class="pg-n">DY</span><span class="pg-v">3.55 m</span></div>
      <div class="pg-cat"><svg class="pg-chev" viewBox="0 0 8 5"><path d="M.500.500 4 4 7.500.500" fill="none" stroke="#555" stroke-width="1.200"/></svg>Semt Açısı</div>
      <div class="pg-row"><span class="pg-n">Grad</span><span class="pg-v">100.0000</span></div>
      <div class="pg-row"><span class="pg-n">Derece</span><span class="pg-v">90.0000</span></div>
      <div class="pg-row"><span class="pg-n">Radyan</span><span class="pg-v">1.5708</span></div>
      <div class="pg-row"><span class="pg-n">DMS</span><span class="pg-v">90°00'00.00"</span></div>
      <div class="pg-cat"><svg class="pg-chev" viewBox="0 0 8 5"><path d="M.500.500 4 4 7.500.500" fill="none" stroke="#555" stroke-width="1.200"/></svg>Uzunluk</div>
      <div class="pg-row"><span class="pg-n">Uzunluk</span><span class="pg-v">3.55 m</span></div>
      <div class="pg-row"><span class="pg-n">Toplam Uzunluk</span><span class="pg-v">3.55 m</span></div>
    </div>
    <div class="red-box"></div>
  </div>
</div>
</body>
</html>
```

FILE: styles.css
```css
* { box-sizing: border-box; }
html, body { margin: 0; padding: 0; height: 100%; overflow: hidden; background: #fff; }
body { font: 11.5px/15px "Open Sans", "Noto Sans", sans-serif; color: #444; }
svg { display: block; flex: none; }
.defs { position: absolute; }
.i16 { width: 16px; height: 16px; }
.i14 { width: 14px; height: 14px; }
.i12 { width: 12px; height: 12px; }
.i11 { width: 11px; height: 11px; }
.i-chev { width: 8px; height: 5px; }
.i-drop { width: 6px; height: 3px; }

.app { position: relative; width: 1920px; height: 1026px; display: flex; flex-direction: column; overflow: hidden; }

/* title bar */
.titlebar { height: 29px; display: flex; align-items: center; flex: none; }
.qat { width: 592px; padding-left: 7px; display: flex; align-items: center; gap: 8px; }
.q-logo { margin-right: -3px; }
.q-wide { margin-right: 1px; }
.qat-drop { display: flex; align-items: center; gap: 6px; margin-right: -1px; }
.doc-title { width: 356px; color: #666; white-space: pre; }
.ctx-tab { width: 105px; height: 29px; line-height: 29px; text-align: center; background: #ebe5eb; }
.win-btns { margin-left: auto; padding-right: 14px; display: flex; align-items: center; gap: 28px; }

/* tabs */
.tabs { height: 29px; display: flex; align-items: stretch; flex: none; padding-left: 1px; padding-top: 2px; }
.li-btn { width: 60px; height: 27px; background: #2f5aa6; color: #fff; font: 700 17px/21px "Open Sans", sans-serif; text-align: center; border: 3px solid #ea6f1c; outline: 1px solid #2a70b8; outline-offset: -1px; margin-right: -1px; }
.tab { padding: 0 13.350px; line-height: 25px; white-space: nowrap; }
.tab-text { display: inline-block; height: 27px; border-bottom: 3px solid #1168b5; }
.cmd-search { display: flex; align-items: center; gap: 1px; height: 23px; margin-left: 3px; }
.tab-right { margin-left: auto; display: flex; align-items: center; gap: 8px; padding-right: 8px; height: 25px; }
.vsep { width: 1px; height: 20px; background: #e1e1e1; margin: 0 -2px 0 -2px; }
.first-win { margin-left: 5px; }
.tab-right .i11 + .i11 { margin-left: 8px; }

/* ribbon */
.ribbon { height: 95px; flex: none; display: flex; border-bottom: 2px solid #e3e3e3; padding-top: 1px; }
.group { display: flex; flex-direction: column; position: relative; }
.group::after { content: ""; position: absolute; right: 0; top: 3px; bottom: 2px; width: 1px; background: #e1e1e1; }
.g1 { width: 104px; }
.g2 { width: 457px; }
.g3 { width: 334px; }
.group-body { display: flex; height: 73px; }
.group-label { height: 20px; line-height: 20px; text-align: center; position: relative; white-space: nowrap; padding-right: 1px; }
.g1 .group-label { text-align: left; padding-left: 3px; }
.launcher { position: absolute; right: 5px; top: 6px; width: 8px; height: 8px; }
.big { display: flex; flex-direction: column; align-items: center; padding-top: 9px; }
.big-ic { width: 28px; height: 30px; margin-bottom: 3px; }
.big > span { line-height: 15px; white-space: nowrap; }
.b-cizim { width: 100px; }
.with-chev { display: flex; align-items: center; gap: 2px; }
.b-ackapa { width: 67px; margin-left: 3px; margin-top: 1px; padding-top: 8px; background: #cce4f7; height: 72px; }
.w-k { width: 75px; }
.w-d { width: 40px; }
.w-m { width: 66px; }
.w-t { width: 48px; }
.w-n { width: 58px; }
.w-s { width: 38px; }
.small-col { display: flex; flex-direction: column; position: relative; padding-top: 1px; }
.small-col::before { content: ""; position: absolute; left: 0; top: 5px; bottom: 8px; width: 1px; background: #e1e1e1; }
.item { height: 24px; display: flex; align-items: center; gap: 3px; white-space: nowrap; }
.item.on { background: #cce4f7; }
.c1 { width: 89px; margin-left: 4px; padding-left: 8px; }
.c2 { width: 133px; padding-left: 5px; }
.c2 .item { padding-left: 5px; padding-right: 4px; width: 107px; }
.c2 .item:nth-child(2) { width: 125px; }
.c3 { width: 69px; padding-left: 8px; }
.c4 { width: 90px; padding-left: 5px; }
.c4 .item { padding-left: 4px; width: 83px; margin-top: 8px; }
.ic-t { font: 700 15px "Liberation Sans", sans-serif; fill: #2f6fb0; }
.ic-r { font: 700 9px "Liberation Sans", sans-serif; fill: #c6452f; }
.ic-p { font: 700 8px "Liberation Sans", sans-serif; fill: #3a74ae; text-anchor: middle; }
.collapse { width: 10px; height: 6px; margin-left: auto; margin-right: 10px; margin-top: 81px; }

/* main */
.main { flex: 1; display: flex; min-height: 0; }
.panel { width: 300px; flex: none; display: flex; padding: 2px 0 2px 2px; position: relative; }
.panel > * { min-height: 0; }
.side { width: 25px; flex: none; display: flex; flex-direction: column; justify-content: flex-end; border: 1px solid #e3e3e3; border-right: 0; padding-bottom: 5px; }
.side-tab { display: flex; flex-direction: column; align-items: center; gap: 6px; padding-left: 2px; font-size: 10.500px; }
.vtext { writing-mode: vertical-rl; transform: rotate(180deg); line-height: 16px; white-space: nowrap; }
.s-cizgi { margin-bottom: 22px; }
.s-yazi { margin-bottom: 25px; }
.s-ara { margin-bottom: 18px; }
.s-ref { height: 96px; justify-content: flex-end; padding-bottom: 10px; border-right: 1px solid #ddd; border-bottom: 1px solid #ddd; background: #fff; }
.s-kat { height: 93px; justify-content: flex-end; padding-bottom: 10px; border-left: 2px solid #1168b5; }
.panel-body { flex: 1; display: flex; flex-direction: column; border: 1px solid #e3e3e3; border-left: 0; min-width: 0; }
.panel-head { height: 28px; flex: none; display: flex; align-items: center; gap: 4px; padding: 0 13px 0 8px; margin-left: -25px; position: relative; color: #333; }
.panel-head b { font-size: 11.500px; }
.pin { width: 8px; height: 10px; margin-left: auto; }
.panel-inner { flex: 1; display: flex; flex-direction: column; border-left: 1px solid #e3e3e3; padding-left: 8px; min-height: 0; }
.p-toolbar { height: 24px; flex: none; display: flex; align-items: center; gap: 7px; padding-left: 4px; }
.t-sep { width: 1px; height: 22px; background: #e1e1e1; margin: 0 -3.500px; }
.t-drop { display: flex; align-items: center; gap: 3px; }
.filter { height: 21px; flex: none; width: 262px; margin-left: 1px; border: 1px solid #aaa; display: flex; align-items: center; justify-content: flex-end; gap: 6px; padding-right: 5px; }
.filter-chev { width: 9px; height: 14px; }
.grid { width: 263px; margin-top: 1px; flex: none; border: 1px solid #aaa; border-right: 2px solid #aaa; border-bottom: 0; display: flex; flex-direction: column; background: #efefef; }
.grid-top { display: flex; height: 729px; }
.list { width: 245px; overflow: hidden; flex: none; }
.hdr { height: 27px; display: flex; background: #fff; border-bottom: 2px solid #aaa; }
.ind { width: 12px; flex: none; background: #fff; border-right: 1px solid #aaa; border-bottom: 1px solid #aaa; display: flex; align-items: center; justify-content: center; }
.hdr .ind { border-bottom: 0; }
.sun { width: 10px; height: 10px; }
.h-name { width: 160px; flex: none; display: flex; align-items: center; justify-content: space-between; padding: 0 6px 0 7px; border-right: 1px solid #aaa; color: #555; }
.sort { width: 9px; height: 8px; }
.h-c { border-right: 1px solid #aaa; }
.c-sw { width: 18px; flex: none; display: flex; align-items: center; justify-content: center; }
.c-i { width: 16px; flex: none; display: flex; align-items: center; justify-content: center; }
.c-cut { width: 7px; flex: none; overflow: hidden; display: flex; align-items: center; justify-content: flex-start; padding-left: 2px; }
.i-eye { width: 14px; height: 9px; }
.i-lock { width: 11px; height: 12px; }
.i-cut { width: 6px; height: 12px; }
.hatch { width: 12px; height: 12px; border: 1px solid #3a74ae; background: repeating-conic-gradient(#3a74ae 0 25%, #fff 0 50%) 0 0 / 2px 2px; }
.row { height: 18px; display: flex; background: #fff; }
.row:nth-child(odd) { background: #efefef; }
.row.sel { background: #e3e3e3; }
.arrow { width: 4px; height: 7px; }
.nm { width: 160px; flex: none; padding-left: 2px; line-height: 18px; white-space: nowrap; overflow: hidden; font-size: 11.200px; color: #4a4a4a; }
.nm.ch { padding-left: 11px; }
.sw { width: 14px; height: 14px; border: 1px solid #999; }
.bx { width: 12px; height: 12px; border: 1px solid #c8452f; }
.vscroll { width: 16px; flex: none; display: flex; flex-direction: column; background: #efefef; }
.sb-btn { width: 16px; height: 17px; flex: none; background: #fff; border: 1px solid #aaa; display: flex; align-items: center; justify-content: center; }
.sb-btn.end { margin-top: auto; }
.i-tri { width: 8px; height: 4px; }
.i-tri-v { width: 4px; height: 8px; }
.v-thumb { height: 326px; background: #fff; border-bottom: 1px solid #aaa; }
.hscroll { height: 18px; display: flex; background: #efefef; }
.h-thumb { width: 132px; background: #fff; border: 1px solid #aaa; border-left: 0; margin-right: 79px; }
.corner { width: 17px; background: #fff; }
.count { flex: none; width: 263px; border-top: 2px solid #1168b5; height: 21px; display: flex; align-items: center; gap: 16px; padding-left: 4px; color: #444; }

/* canvas */
.canvas { flex: 1; min-width: 0; }
.drawing { width: 1620px; height: 848px; }
.grid-lines path { stroke: #666; fill: none; }
.red-lines path { stroke: #f00; fill: none; }
.bubbles circle { fill: #fff; stroke: #ff8c1a; }
.axis { font: 78px "Liberation Sans", sans-serif; fill: #333; text-anchor: middle; }
.dim { font: 35px "Liberation Sans", sans-serif; fill: #111; text-anchor: middle; }

/* status */
.status { height: 25px; flex: none; display: flex; align-items: center; border-top: 1px solid #1168b5; background: #fff; }
.st-swatch { width: 14px; height: 14px; margin-left: 2px; background: #00f; }
.st-layer { width: 122px; padding-left: 4px; }
.st-scale { width: 38px; }
.st-select { width: 80px; height: 21px; border: 1px solid #aaa; display: flex; align-items: center; justify-content: space-between; padding: 0 6px 0 3px; }
.st-ic { width: 16px; height: 18px; margin-left: 9px; }
.st-crs { width: 139px; padding-left: 1px; letter-spacing: -.5px; }
.globe { width: 18px; margin-left: 0; }
.st-coord { width: 527px; padding-left: 1px; letter-spacing: -.2px; }
.st-mode { color: #333; }

/* dialog */
.dialog { position: absolute; left: 1335px; top: 486px; width: 267px; bottom: -2px; background: #fff; border: 1px solid #d0d0d0; border-radius: 8px 8px 0 0; box-shadow: 0 2px 10px rgba(0,0,0,.22); padding: 0 7px; display: flex; flex-direction: column; }
.dlg-title { height: 15px; display: flex; align-items: center; justify-content: space-between; padding: 0 0 0 4px; color: #555; }
.dlg-x { width: 9px; height: 9px; }
.dlg-info { display: flex; align-items: center; height: 34px; margin-top: 11px; margin-left: -1px; gap: 14px; }
.dlg-tri { width: 32px; height: 28px; }
.dlg-info-t { display: flex; flex-direction: column; line-height: 15px; }
.dlg-info-t b { color: #333; }
.pg { margin-top: 4px; flex: 1; border: 1px solid #aaa; border-bottom: 0; width: 251px; }
.pg-cat { height: 18px; display: flex; align-items: center; font-weight: 700; color: #444; padding-left: 4px; padding-bottom: 2px; gap: 5px; }
.pg-chev { width: 8px; height: 5px; }
.pg-row { height: 18px; display: flex; margin-left: 14px; border-bottom: 1px solid #e3e3e3; border-left: 1px solid #e3e3e3; }
.pg-n { width: 114px; flex: none; padding-left: 16px; line-height: 17px; border-right: 1px solid #e3e3e3; }
.pg-v { flex: 1; text-align: right; padding-right: 2px; line-height: 17px; }
.act .pg-n { background: #cce4f7; }
.act .pg-v { outline: 1px dotted #333; outline-offset: -1px; }
.red-box { position: absolute; left: 5px; top: 240px; width: 259px; height: 75px; border: 5px solid #ed1c24; }
```
